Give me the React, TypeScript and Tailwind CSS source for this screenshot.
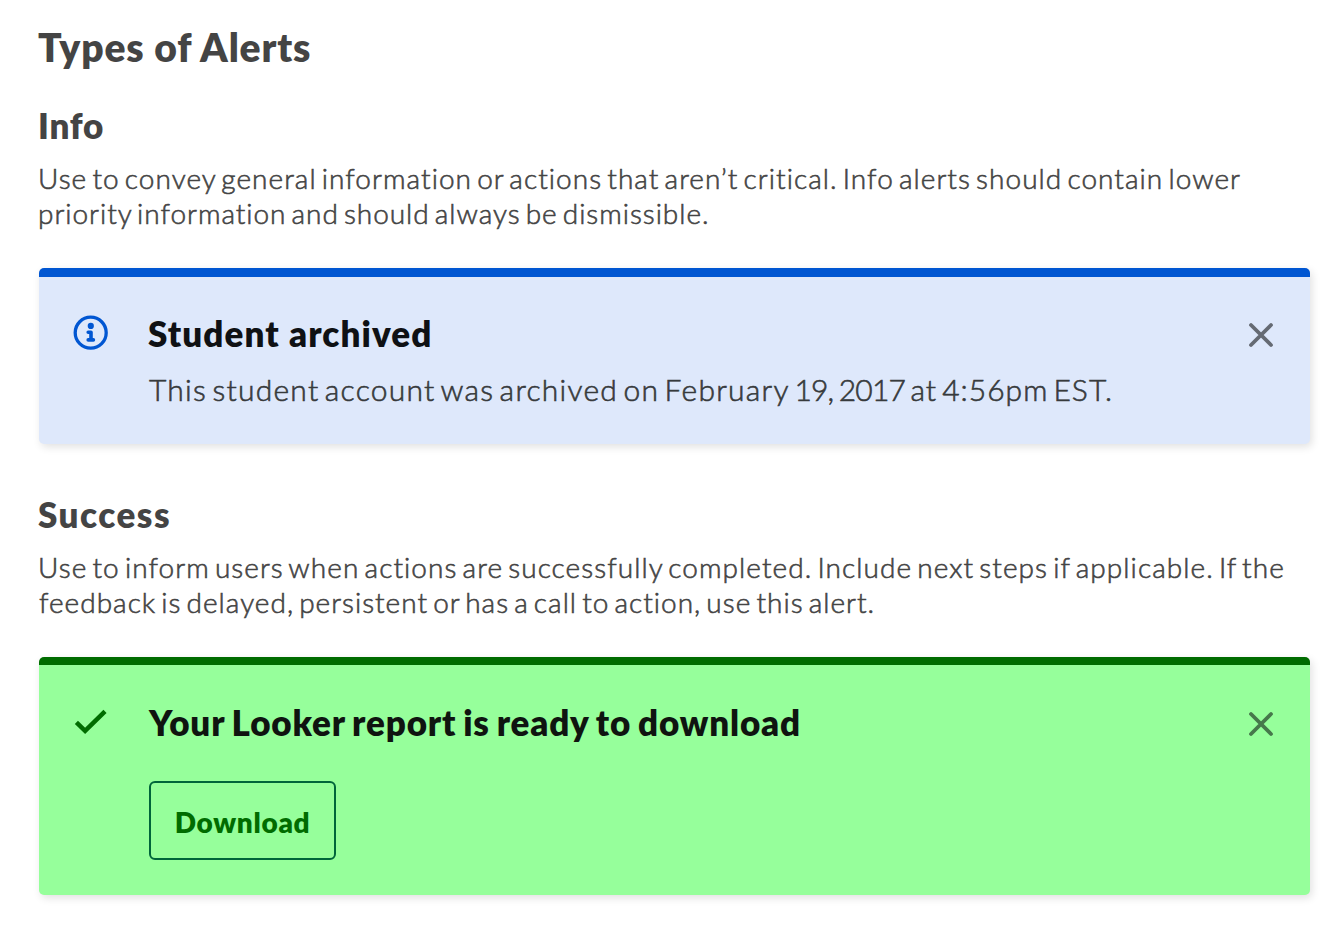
import React, { type ReactNode } from "react";

function CloseIcon({ className }: { className: string }) {
  return (
    <svg className={className} width="26" height="26" viewBox="0 0 26 26" fill="none" stroke="currentColor" strokeWidth="3.8" strokeLinecap="round">
      <path d="M3 3 L23 23 M23 3 L3 23" />
    </svg>
  );
}

function InfoIcon() {
  return (
    <svg width="36" height="36" viewBox="0 0 36 36" className="text-[#0056d2]">
      <circle cx="17.7" cy="17.7" r="15.5" fill="none" stroke="currentColor" strokeWidth="3.3" />
      <circle cx="17.8" cy="10.9" r="3.1" fill="currentColor" />
      <path d="M15.2 17.2 H18 V24.9 M15.2 24.9 H20.4" fill="none" stroke="currentColor" strokeWidth="3.6" strokeLinecap="round" strokeLinejoin="round" />
    </svg>
  );
}

function CheckIcon() {
  return (
    <svg width="36" height="36" viewBox="0 0 36 36" fill="none" stroke="currentColor" strokeWidth="4.5" className="text-[#006c00]">
      <path d="M3.4 18.4 L12.1 26.8 L32 7.3" />
    </svg>
  );
}

function Section({ title, titleClass, lines, children }: { title: string; titleClass: string; lines: ReactNode; children: ReactNode }) {
  return (
    <section className="h-[389px]">
      <h2 className={`text-[35px] leading-[42px] font-extrabold ${titleClass}`}>{title}</h2>
      <div className="mt-[15px] text-[28px] leading-[35px] font-light whitespace-nowrap [-webkit-text-stroke:0.6px_#444] [word-spacing:-3.5px]">{lines}</div>
      {children}
    </section>
  );
}

export default function App() {
  return (
    <main className="h-[936px] w-[1343px] overflow-hidden bg-white pt-[24px] pr-[33px] pl-[39px] font-['Lato',sans-serif] text-[#444]">
      <h1 className="-ml-px text-[39px] leading-[47px] font-extrabold tracking-[0.83px]">Types of Alerts</h1>
      <div className="pt-[33px]">
        <Section
          title="Info"
          titleClass="-ml-px tracking-[0.8px]"
          lines={
            <>
              <p className="-ml-px tracking-[1.045px]">Use to convey general information or actions that aren’t critical. Info alerts should contain lower</p>
              <p className="-ml-px tracking-[0.97px]">priority information and should always be dismissible.</p>
            </>
          }
        >
          <div className="mt-[37px] flex h-[176px] rounded-[5px] border-t-[9px] border-[#0056d2] bg-[#dee8fb] pt-[34px] pr-9 pl-[34px] shadow-[2px_3px_8px_rgba(0,0,0,0.12)]">
            <div className="mt-[4px] w-[76px] shrink-0"><InfoIcon /></div>
            <div className="grow pt-px whitespace-nowrap">
              <h3 className="-ml-px text-[35px] leading-[42px] font-extrabold tracking-[1.1px] text-[#0f1114]">Student archived</h3>
              <p className="mt-[17px] text-[30px] leading-9 font-light tracking-[1.25px] text-[#373a3c] [-webkit-text-stroke:0.6px_#373a3c] [word-spacing:-4px]">
                This student account was archived on February <span className="tracking-[-0.8px] [word-spacing:-2px]">19, 2017 </span>
                <span className="tracking-[1px]">at 4:56pm EST.</span>
              </p>
            </div>
            <button aria-label="Close" className="mt-[11px] h-[26px] shrink-0"><CloseIcon className="text-[#656a73]" /></button>
          </div>
        </Section>
        <Section
          title="Success"
          titleClass="-ml-px tracking-[1.5px]"
          lines={
            <>
              <p className="-ml-px tracking-[1.06px]">Use to inform users when actions are successfully completed. Include next steps if applicable. If the</p>
              <p className="tracking-[1.01px]">feedback is delayed, persistent or has a call to action, use this alert.</p>
            </>
          }
        >
          <div className="mt-[37px] flex h-[238px] rounded-[5px] border-t-8 border-[#006c00] bg-[#96ff9b] pt-[35px] pr-9 pl-[34px] shadow-[2px_3px_8px_rgba(0,0,0,0.12)]">
            <div className="mt-[4px] w-[76px] shrink-0"><CheckIcon /></div>
            <div className="grow pt-px whitespace-nowrap">
              <h3 className="text-[35px] leading-[42px] font-extrabold tracking-[0.83px] text-[#0f1410] [word-spacing:-2px]">Your Looker report is ready to download</h3>
              <button className="mt-[38px] flex h-[79px] w-[187px] items-center justify-center rounded-md border-2 border-[#00653a] pt-[2px] text-[28px] leading-[34px] font-extrabold tracking-[0.7px] text-[#006c00]">Download</button>
            </div>
            <button aria-label="Close" className="mt-[11px] h-[26px] shrink-0"><CloseIcon className="text-[#46784b]" /></button>
          </div>
        </Section>
      </div>
    </main>
  );
}
